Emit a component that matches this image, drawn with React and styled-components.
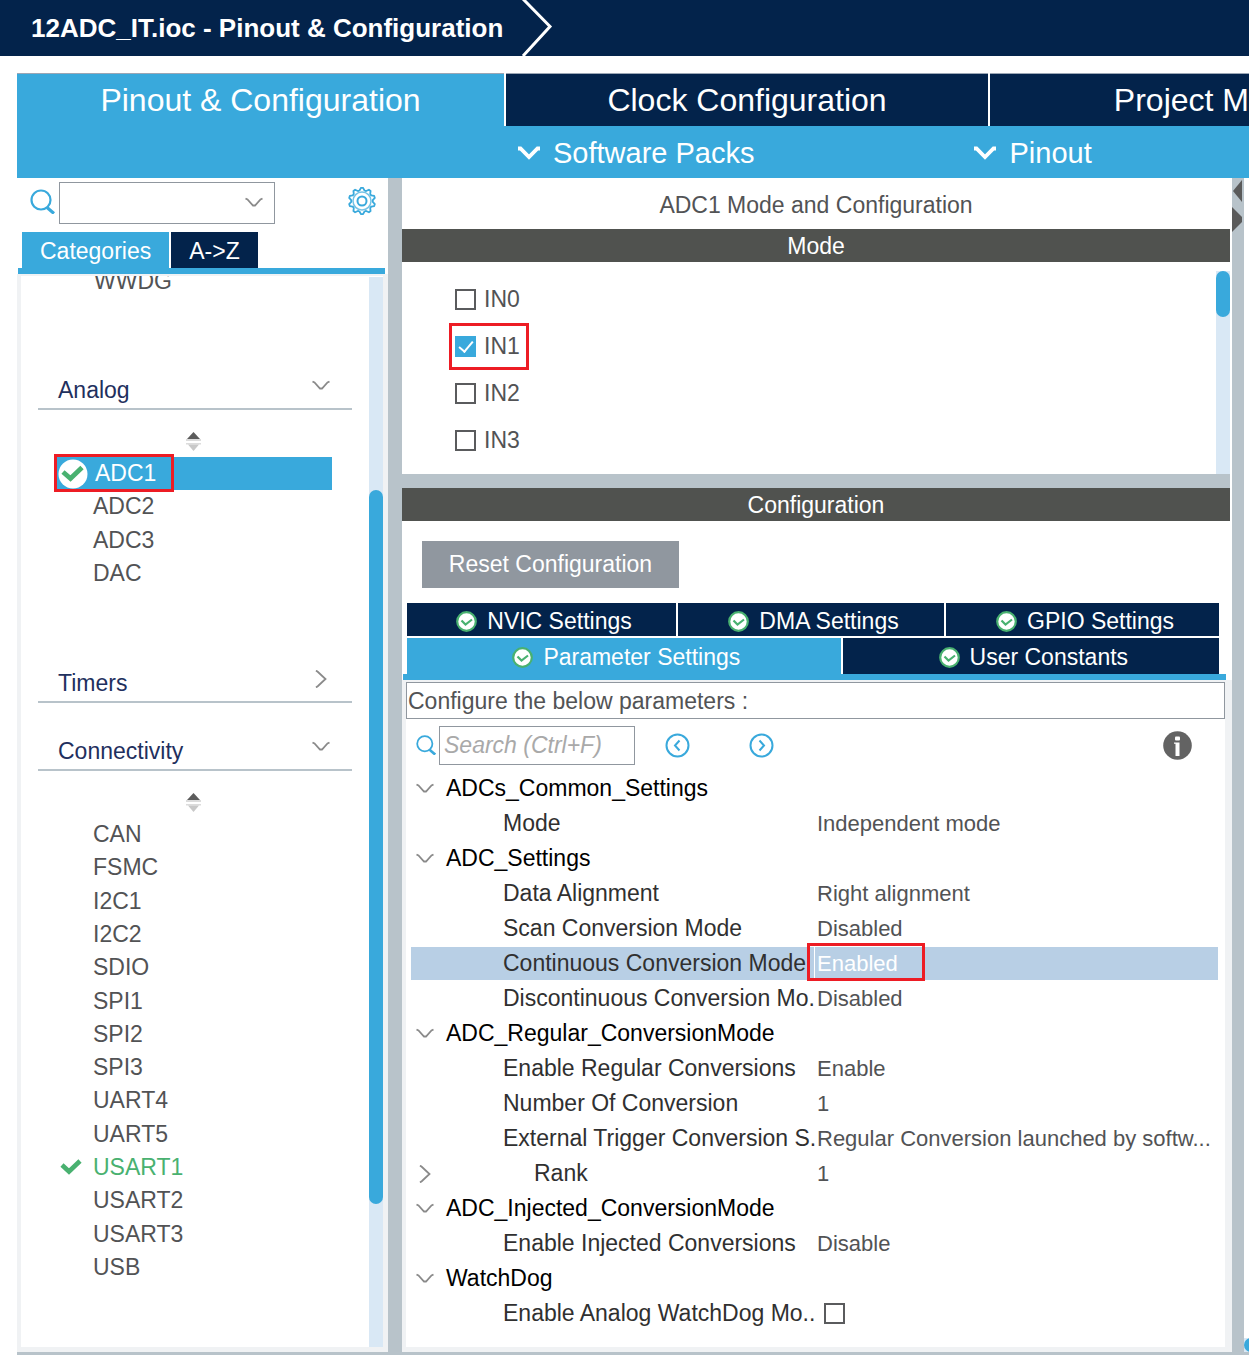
import React from "react";
import styled, { createGlobalStyle, css } from "styled-components";

const color = {
  navy: "#03234b",
  blue: "#39a9dc",
  bar: "#50524f",
  splitter: "#b8c3ca",
  frame: "#f0f2f4",
  track: "#d9e8f5",
  text: "#525355",
  outline: "#90979f",
  green: "#49b170",
  mark: "#ed1c24",
};

const GlobalStyle = createGlobalStyle`
  *, *::before, *::after { box-sizing: border-box; }
  body {
    margin: 0;
    background: #fff;
    color: ${color.text};
    font: 23px/33px "Liberation Sans", Arial, sans-serif;
    overflow-x: hidden;
  }
  button, input, select { font: inherit; color: inherit; margin: 0; padding: 0; border-radius: 0; }
  button { border: 0; background: none; cursor: pointer; }
  ul { list-style: none; margin: 0; padding: 0; }
  h1, h2, p { margin: 0; font-size: inherit; font-weight: normal; }
  svg { display: block; flex: none; }
`;

/* ---------- icons ---------- */

const ChevronDown = ({ bold }) =>
  bold ? (
    <svg width="24" height="16" viewBox="0 0 24 16" fill="none">
      <path d="M1 3.500 H3.500 L12 12 L20.500 3.500 H23" stroke="#fff" strokeWidth="3.800" />
    </svg>
  ) : (
    <svg width="18" height="18" viewBox="0 0 18 18" fill="none">
      <path d="M.5 4.500 L2.500 5.500 L8 11.500 H10 L15.500 5.500 L17.500 4.500" stroke="#8a8a8a" strokeWidth="1.800" />
    </svg>
  );

const ChevronRight = () => (
  <svg width="18" height="18" viewBox="0 0 18 18" fill="none">
    <path d="M4 .5 L6 2 L13.500 9 L6 16 L4 17.500" stroke="#8a8a8a" strokeWidth="1.800" />
  </svg>
);

const SearchIcon = ({ size }) => (
  <svg width={size} height={size} viewBox="0 0 25 25" fill="none" stroke={color.blue}>
    <circle cx="11" cy="11" r="9.500" strokeWidth="2.200" />
    <path d="M17 18.500 L24 24.500" strokeWidth="3.200" />
  </svg>
);

const gearPoints = Array.from({ length: 40 }, (_, i) => {
  const angle = ((i - 0.5) * Math.PI) / 20;
  const radius = i % 4 < 2 ? 13.2 : 10.8;
  return `${14 + radius * Math.sin(angle)},${14 - radius * Math.cos(angle)}`;
}).join(" ");

const GearIcon = () => (
  <svg width="28" height="28" viewBox="0 0 28 28" fill="none" stroke={color.blue}>
    <polygon points={gearPoints} strokeWidth="1.800" strokeLinejoin="round" />
    <circle cx="14" cy="14" r="9" strokeWidth="1.500" strokeOpacity=".7" />
    <circle cx="14" cy="14" r="4.500" strokeWidth="2" />
  </svg>
);

const SortIcon = () => (
  <svg width="15" height="19" viewBox="0 0 15 19">
    <path d="M7.500 0 L14 7 H1 Z" fill="#5c5c5c" />
    <path d="M0 7 H15 V9 H0 Z M0 11 H15 V12.500 H0 Z" fill="#dcdcdc" />
    <path d="M2 12.500 H13 L7.500 19 Z" fill="#c8c8c8" />
  </svg>
);

const TickIcon = () => (
  <svg width="22" height="18" viewBox="0 0 22 18" fill="none">
    <path d="M2 7 L9 13.500 L20 3" stroke={color.green} strokeWidth="4.600" />
  </svg>
);

const TickDisc = () => (
  <svg width="30" height="30" viewBox="0 0 30 30" fill="none">
    <circle cx="15" cy="15" r="14.500" fill="#fff" />
    <path d="M5 13 L12.500 19.500 L24 8.500" stroke={color.green} strokeWidth="4.800" />
  </svg>
);

const OkBadge = () => (
  <svg width="21" height="21" viewBox="0 0 21 21" fill="none">
    <circle cx="10.500" cy="10.500" r="9.300" fill="#fff" stroke={color.green} strokeWidth="2.200" />
    <path d="M5.500 9.500 L9.500 13.500 L16 8.500" stroke={color.green} strokeWidth="2.200" />
  </svg>
);

const StepIcon = ({ forward }) => (
  <svg width="25" height="25" viewBox="0 0 25 25" fill="none" stroke={color.blue}>
    <circle cx="12.500" cy="12.500" r="11" strokeWidth="2" />
    <path d={forward ? "M10.500 7.500 L15 12.500 L10.500 17.500" : "M14.500 7.500 L10 12.500 L14.500 17.500"} strokeWidth="2" />
  </svg>
);

const InfoIcon = () => (
  <svg width="29" height="29" viewBox="0 0 29 29">
    <circle cx="14.500" cy="14.500" r="14.300" fill="#636363" />
    <rect x="12" y="5.500" width="5" height="4" rx="1" fill="#fff" />
    <path d="M11 11.500 H16.500 V25 H12.500 V12.800 H11 Z" fill="#fff" />
  </svg>
);

/* ---------- shell ---------- */

const TitleBar = styled.header`
  display: flex;
  align-items: center;
  gap: 18px;
  height: 56px;
  padding-left: 31px;
  background: ${color.navy};
  color: #fff;
  h1 { font-size: 26px; font-weight: bold; white-space: nowrap; }
`;

const Window = styled.main`
  margin: 17px 0 18px 17px;
  border-bottom: 3px solid ${color.splitter};
`;

const MainTabs = styled.nav`
  display: flex;
  gap: 2px;
`;

const MainTab = styled.button`
  flex: ${(p) => (p.$cut ? "1 1 0" : `0 1 ${p.$width}px`)};
  height: 53px;
  border-top: 1px solid #9ba6b5;
  background: ${(p) => (p.$active ? color.blue : color.navy)};
  color: #fff;
  font-size: 32px;
  text-align: ${(p) => (p.$cut ? "right" : "center")};
  white-space: nowrap;
`;

const MenuBar = styled.div`
  display: flex;
  align-items: center;
  gap: 219px;
  height: 52px;
  padding: 2px 0 0 500px;
  background: ${color.blue};
`;

const MenuButton = styled.button`
  display: flex;
  align-items: center;
  gap: 12px;
  color: #fff;
  font-size: 29px;
  white-space: nowrap;
`;

const Workspace = styled.div`
  display: grid;
  grid-template-columns: 371px 14px minmax(0, 1fr) 12px 5px;
`;

const Splitter = styled.div`
  background: ${color.splitter};
  height: ${(p) => (p.$row ? "14px" : "auto")};
  margin-right: ${(p) => (p.$row ? "2px" : "0")};
`;

const CollapseRail = styled(Splitter)`
  display: flex;
  flex-direction: column;
  gap: 5px;
  padding-top: 2px;
`;

const CanvasEdge = styled.div`
  display: flex;
  align-items: flex-end;
  overflow: hidden;
`;

const CanvasScroll = styled.div`
  width: 100%;
  height: 14px;
  background: ${color.track};
  &::before {
    content: "";
    display: block;
    width: 28px;
    height: 14px;
    border-radius: 7px;
    background: ${color.blue};
  }
`;

const ScrollTrack = styled.div`
  flex: none;
  width: 14px;
  margin-top: ${(p) => p.$top}px;
  padding-top: ${(p) => p.$offset}px;
  background: ${color.track};
`;

const ScrollThumb = styled.div`
  height: ${(p) => p.$length}px;
  border-radius: 7px;
  background: ${color.blue};
`;

/* Red annotation frame drawn over the marked item */
const marked = css`
  position: relative;
  &::after {
    content: "";
    position: absolute;
    inset: ${(p) => p.$inset};
    border: 3px solid ${color.mark};
    pointer-events: none;
  }
`;

/* ---------- sidebar ---------- */

const Sidebar = styled.aside`
  display: flex;
  flex-direction: column;
`;

const FilterRow = styled.div`
  display: flex;
  align-items: flex-start;
  height: 54px;
  padding: 4px 12px 0 13px;
  > svg { margin-top: 7px; }
`;

const Combo = styled.div`
  display: grid;
  width: 216px;
  margin: 0 auto 0 4px;
  select {
    grid-area: 1 / 1;
    height: 42px;
    padding: 0 34px 0 6px;
    border: 1px solid ${color.outline};
    background: #fff;
    appearance: none;
  }
  svg { grid-area: 1 / 1; place-self: center end; margin-right: 12px; pointer-events: none; }
`;

const GearButton = styled.button`
  margin-top: 5px;
`;

const SideTabs = styled.div`
  display: flex;
  gap: 2px;
  margin: 0 3px 0 1px;
  padding-left: 4px;
  border-bottom: 6px solid ${color.blue};
`;

const SideTab = styled.button`
  height: 36px;
  padding: 2px 18px 0;
  background: ${(p) => (p.$active ? color.blue : color.navy)};
  color: #fff;
`;

const TreeFrame = styled.div`
  display: flex;
  flex: 1;
  border: solid ${color.frame};
  border-width: 2px 5px 5px 4px;
`;

const Tree = styled.div`
  flex: 1;
  padding: 0 17px 63px;
  overflow: hidden;
`;

const ClippedItem = styled.div`
  height: 105px;
  margin-top: -11px;
  padding-left: 56px;
`;

const Section = styled.section`
  margin-bottom: ${(p) => p.$gap}px;
`;

const SectionHeader = styled.button`
  display: flex;
  justify-content: space-between;
  width: 100%;
  height: 40px;
  padding: 4px 22px 0 20px;
  border-bottom: 2px solid ${color.splitter};
  color: #1f305e;
  svg { margin-top: 3px; }
`;

const SortButton = styled.button`
  display: flex;
  justify-content: center;
  width: 100%;
  height: 47px;
  padding: 22px 3px 0 0;
`;

const PeripheralList = styled.ul`
  display: grid;
  grid-auto-rows: 1fr;
  height: ${(p) => p.$height}px;
  padding: 0 20px 0 19px;
`;

const Peripheral = styled.li`
  display: flex;
  align-items: center;
  padding-left: ${(p) => (p.$selected ? 1 : 3)}px;
  background: ${(p) => (p.$selected ? color.blue : "transparent")};
  color: ${(p) => (p.$selected ? "#fff" : p.$enabled ? color.green : "inherit")};
  ${(p) => p.$selected && marked}
`;

const StatusSlot = styled.span`
  flex: none;
  width: ${(p) => (p.$wide ? 37 : 33)}px;
`;

/* ---------- centre ---------- */

const Centre = styled.section`
  display: flex;
  flex-direction: column;
`;

const PanelTitle = styled.h2`
  padding: 11px 2px 7px 0;
  text-align: center;
`;

const PanelBar = styled.h2`
  margin-right: 2px;
  background: ${color.bar};
  color: #fff;
  text-align: center;
  height: 33px;
  line-height: 35px;
`;

const ModeArea = styled.div`
  display: flex;
  height: 212px;
  padding-right: 2px;
`;

const ModeOptions = styled.ul`
  flex: 1;
  padding: 14px 0 0 53px;
  li { display: flex; height: 47px; align-items: center; }
`;

const OptionLabel = styled.label`
  display: flex;
  align-items: center;
  gap: 8px;
  ${(p) => p.$inset && marked}
`;

const CheckBox = styled.input.attrs({ type: "checkbox" })`
  appearance: none;
  display: grid;
  place-items: center;
  width: 21px;
  height: 21px;
  border: 2px solid #5a5b5d;
  background: #fff;
  &:checked { border-color: ${color.blue}; background: ${color.blue}; }
  &:checked::before {
    content: "";
    width: 8px;
    height: 14px;
    margin-top: -4px;
    border: solid #fff;
    border-width: 0 2px 2px 0;
    transform: rotate(40deg);
  }
`;

const ResetButton = styled.button`
  align-self: flex-start;
  margin: 20px 0 15px 20px;
  width: 257px;
  height: 47px;
  background: ${color.outline};
  color: #fff;
`;

const ConfigTabs = styled.div`
  display: flex;
  flex-direction: column;
  gap: 2px;
  margin: 0 6px 0 1px;
  padding: 0 7px 0 4px;
  border-bottom: 6px solid ${color.blue};
`;

const ConfigTabRow = styled.div`
  display: flex;
  gap: 2px;
  height: ${(p) => p.$height}px;
`;

const ConfigTab = styled.button`
  flex: ${(p) => p.$share} 1 0;
  display: flex;
  align-items: center;
  justify-content: center;
  gap: 10px;
  padding: 3px 0 0 5px;
  background: ${(p) => (p.$active ? color.blue : color.navy)};
  color: #fff;
  white-space: nowrap;
`;

const ParameterFrame = styled.div`
  flex: 1;
  border: solid ${color.frame};
  border-width: 2px 7px 5px 4px;
`;

const Hint = styled.p`
  height: 37px;
  padding: 2px 0 0 1px;
  border: 1px solid ${color.outline};
`;

const ParameterTools = styled.div`
  display: flex;
  align-items: center;
  height: 52px;
  padding: 0 33px 0 10px;
`;

const SearchBox = styled.input`
  width: 196px;
  height: 39px;
  margin: 0 30px 0 3px;
  padding: 0 4px;
  border: 1px solid ${color.outline};
  &::placeholder { color: #a9a9a9; font-style: italic; opacity: 1; }
`;

const StepButton = styled.button`
  margin-right: 59px;
`;

const InfoButton = styled.button`
  margin-left: auto;
`;

const ParameterTable = styled.table`
  width: calc(100% - 12px);
  margin: 0 7px 15px 5px;
  border-collapse: separate;
  border-spacing: 0;
  table-layout: fixed;
`;

const NameColumn = styled.col`
  width: 403px;
`;

const Row = styled.tr`
  height: 35px;
  th, td {
    height: 35px;
    padding: 0;
    border: solid transparent;
    border-width: 1px 0;
    background: ${(p) => (p.$selected ? "#b8cfe5" : "transparent")};
    background-clip: padding-box;
    font-weight: normal;
    text-align: left;
    white-space: nowrap;
  }
  th { color: ${(p) => (p.$group ? "#000" : "#303030")}; }
  td { padding-left: 3px; font-size: 22px; }
`;

const NameCell = styled.div`
  display: flex;
  align-items: center;
  gap: ${(p) => (p.$child ? 100 : 12)}px;
  padding-left: ${(p) => (p.$leaf ? 92 : 5)}px;
`;

const Expander = styled.button`
  flex: none;
`;

const Value = styled.span`
  display: block;
  width: max-content;
  ${(p) =>
    p.$inset &&
    css`
      ${marked}
      margin-left: -3px;
      padding-left: 2px;
      border-left: 1px solid #fff;
      color: #fff;
    `}
`;

const CheckSlot = styled.div`
  padding-left: 7px;
`;

/* ---------- data ---------- */

const analog = [{ name: "ADC1", selected: true }, { name: "ADC2" }, { name: "ADC3" }, { name: "DAC" }];

const connectivity = [
  "CAN", "FSMC", "I2C1", "I2C2", "SDIO", "SPI1", "SPI2", "SPI3",
  "UART4", "UART5", "USART1", "USART2", "USART3", "USB",
].map((name) => ({ name, enabled: name === "USART1" }));

const inputs = ["IN0", "IN1", "IN2", "IN3"];

const parameters = [
  { group: "ADCs_Common_Settings" },
  { name: "Mode", value: "Independent mode" },
  { group: "ADC_Settings" },
  { name: "Data Alignment", value: "Right alignment" },
  { name: "Scan Conversion Mode", value: "Disabled" },
  { name: "Continuous Conversion Mode", value: "Enabled", selected: true },
  { name: "Discontinuous Conversion Mo.", value: "Disabled" },
  { group: "ADC_Regular_ConversionMode" },
  { name: "Enable Regular Conversions", value: "Enable" },
  { name: "Number Of Conversion", value: "1" },
  { name: "External Trigger Conversion S.", value: "Regular Conversion launched by softw..." },
  { name: "Rank", value: "1", expandable: true },
  { group: "ADC_Injected_ConversionMode" },
  { name: "Enable Injected Conversions", value: "Disable" },
  { group: "WatchDog" },
  { name: "Enable Analog WatchDog Mo..", check: true },
];

/* ---------- parts ---------- */

function Peripherals({ items, height }) {
  return (
    <PeripheralList $height={height}>
      {items.map(({ name, selected, enabled }) => (
        <Peripheral key={name} $selected={selected} $enabled={enabled} $inset="-3px 158px -2px -3px">
          <StatusSlot $wide={selected}>
            {selected && <TickDisc />}
            {enabled && <TickIcon />}
          </StatusSlot>
          {name}
        </Peripheral>
      ))}
    </PeripheralList>
  );
}

function TreeSection({ title, items, height, gap }) {
  return (
    <Section $gap={gap}>
      <SectionHeader>
        {title}
        {items ? <ChevronDown /> : <ChevronRight />}
      </SectionHeader>
      {items && (
        <>
          <SortButton aria-label={`Sort ${title}`}><SortIcon /></SortButton>
          <Peripherals items={items} height={height} />
        </>
      )}
    </Section>
  );
}

function ParameterRow({ item }) {
  if (item.group) {
    return (
      <Row $group>
        <th colSpan={2}>
          <NameCell>
            <Expander aria-label={`Collapse ${item.group}`}><ChevronDown /></Expander>
            {item.group}
          </NameCell>
        </th>
      </Row>
    );
  }
  return (
    <Row $selected={item.selected}>
      <th scope="row">
        <NameCell $leaf={!item.expandable} $child={item.expandable}>
          {item.expandable && <Expander aria-label={`Expand ${item.name}`}><ChevronRight /></Expander>}
          {item.check ? <label htmlFor="watchdog">{item.name}</label> : item.name}
        </NameCell>
      </th>
      <td>
        {item.check ? (
          <CheckSlot><CheckBox id="watchdog" /></CheckSlot>
        ) : (
          <Value $inset={item.selected && "-4px -27px -1px -8px"}>{item.value}</Value>
        )}
      </td>
    </Row>
  );
}

export default function App() {
  return (
    <>
      <GlobalStyle />
      <TitleBar>
        <h1>12ADC_IT.ioc - Pinout &amp; Configuration</h1>
        <svg width="34" height="56" viewBox="0 0 34 56" fill="none">
          <path d="M2 -1 L29 26.500 L2 56" stroke="#fff" strokeWidth="3" />
        </svg>
      </TitleBar>
      <Window>
        <MainTabs>
          <MainTab $active $width={487}>Pinout &amp; Configuration</MainTab>
          <MainTab $width={482}>Clock Configuration</MainTab>
          <MainTab $cut>Project M</MainTab>
        </MainTabs>
        <MenuBar>
          <MenuButton><ChevronDown bold />Software Packs</MenuButton>
          <MenuButton><ChevronDown bold />Pinout</MenuButton>
        </MenuBar>
        <Workspace>
          <Sidebar>
            <FilterRow>
              <SearchIcon size={25} />
              <Combo>
                <select aria-label="Find peripheral" />
                <ChevronDown />
              </Combo>
              <GearButton aria-label="Settings"><GearIcon /></GearButton>
            </FilterRow>
            <SideTabs>
              <SideTab $active>Categories</SideTab>
              <SideTab>A-&gt;Z</SideTab>
            </SideTabs>
            <TreeFrame>
              <Tree>
                <ClippedItem>WWDG</ClippedItem>
                <TreeSection title="Analog" items={analog} height={133} gap={73} />
                <TreeSection title="Timers" gap={28} />
                <TreeSection title="Connectivity" items={connectivity} height={466} gap={0} />
              </Tree>
              <ScrollTrack $top={1} $offset={213}>
                <ScrollThumb $length={714} />
              </ScrollTrack>
            </TreeFrame>
          </Sidebar>
          <Splitter />
          <Centre>
            <PanelTitle>ADC1 Mode and Configuration</PanelTitle>
            <PanelBar>Mode</PanelBar>
            <ModeArea>
              <ModeOptions>
                {inputs.map((name) => (
                  <li key={name}>
                    <OptionLabel $inset={name === "IN1" && "-7px -9px -7px -6px"}>
                      <CheckBox defaultChecked={name === "IN1"} />
                      {name}
                    </OptionLabel>
                  </li>
                ))}
              </ModeOptions>
              <ScrollTrack $top={9} $offset={0}>
                <ScrollThumb $length={46} />
              </ScrollTrack>
            </ModeArea>
            <Splitter $row />
            <PanelBar>Configuration</PanelBar>
            <ResetButton>Reset Configuration</ResetButton>
            <ConfigTabs>
              <ConfigTabRow $height={33}>
                <ConfigTab $share={269}><OkBadge />NVIC Settings</ConfigTab>
                <ConfigTab $share={266}><OkBadge />DMA Settings</ConfigTab>
                <ConfigTab $share={273}><OkBadge />GPIO Settings</ConfigTab>
              </ConfigTabRow>
              <ConfigTabRow $height={36}>
                <ConfigTab $active $share={434}><OkBadge />Parameter Settings</ConfigTab>
                <ConfigTab $share={376}><OkBadge />User Constants</ConfigTab>
              </ConfigTabRow>
            </ConfigTabs>
            <ParameterFrame>
              <Hint>Configure the below parameters :</Hint>
              <ParameterTools>
                <SearchIcon size={20} />
                <SearchBox type="text" aria-label="Search parameters" placeholder="Search (Ctrl+F)" />
                <StepButton aria-label="Previous match"><StepIcon /></StepButton>
                <StepButton aria-label="Next match"><StepIcon forward /></StepButton>
                <InfoButton aria-label="Information"><InfoIcon /></InfoButton>
              </ParameterTools>
              <ParameterTable>
                <colgroup><NameColumn /><col /></colgroup>
                <tbody>
                  {parameters.map((item) => (
                    <ParameterRow key={item.group || item.name} item={item} />
                  ))}
                </tbody>
              </ParameterTable>
            </ParameterFrame>
          </Centre>
          <CollapseRail>
            <button aria-label="Collapse left">
              <svg width="12" height="22" viewBox="0 0 12 22"><path d="M10 0 V22 L1 11 Z" fill="#5a5a5a" /></svg>
            </button>
            <button aria-label="Collapse right">
              <svg width="12" height="25" viewBox="0 0 12 25"><path d="M0 0 L10 10 V15 L0 25 Z" fill="#5a5a5a" /></svg>
            </button>
          </CollapseRail>
          <CanvasEdge><CanvasScroll /></CanvasEdge>
        </Workspace>
      </Window>
    </>
  );
}
